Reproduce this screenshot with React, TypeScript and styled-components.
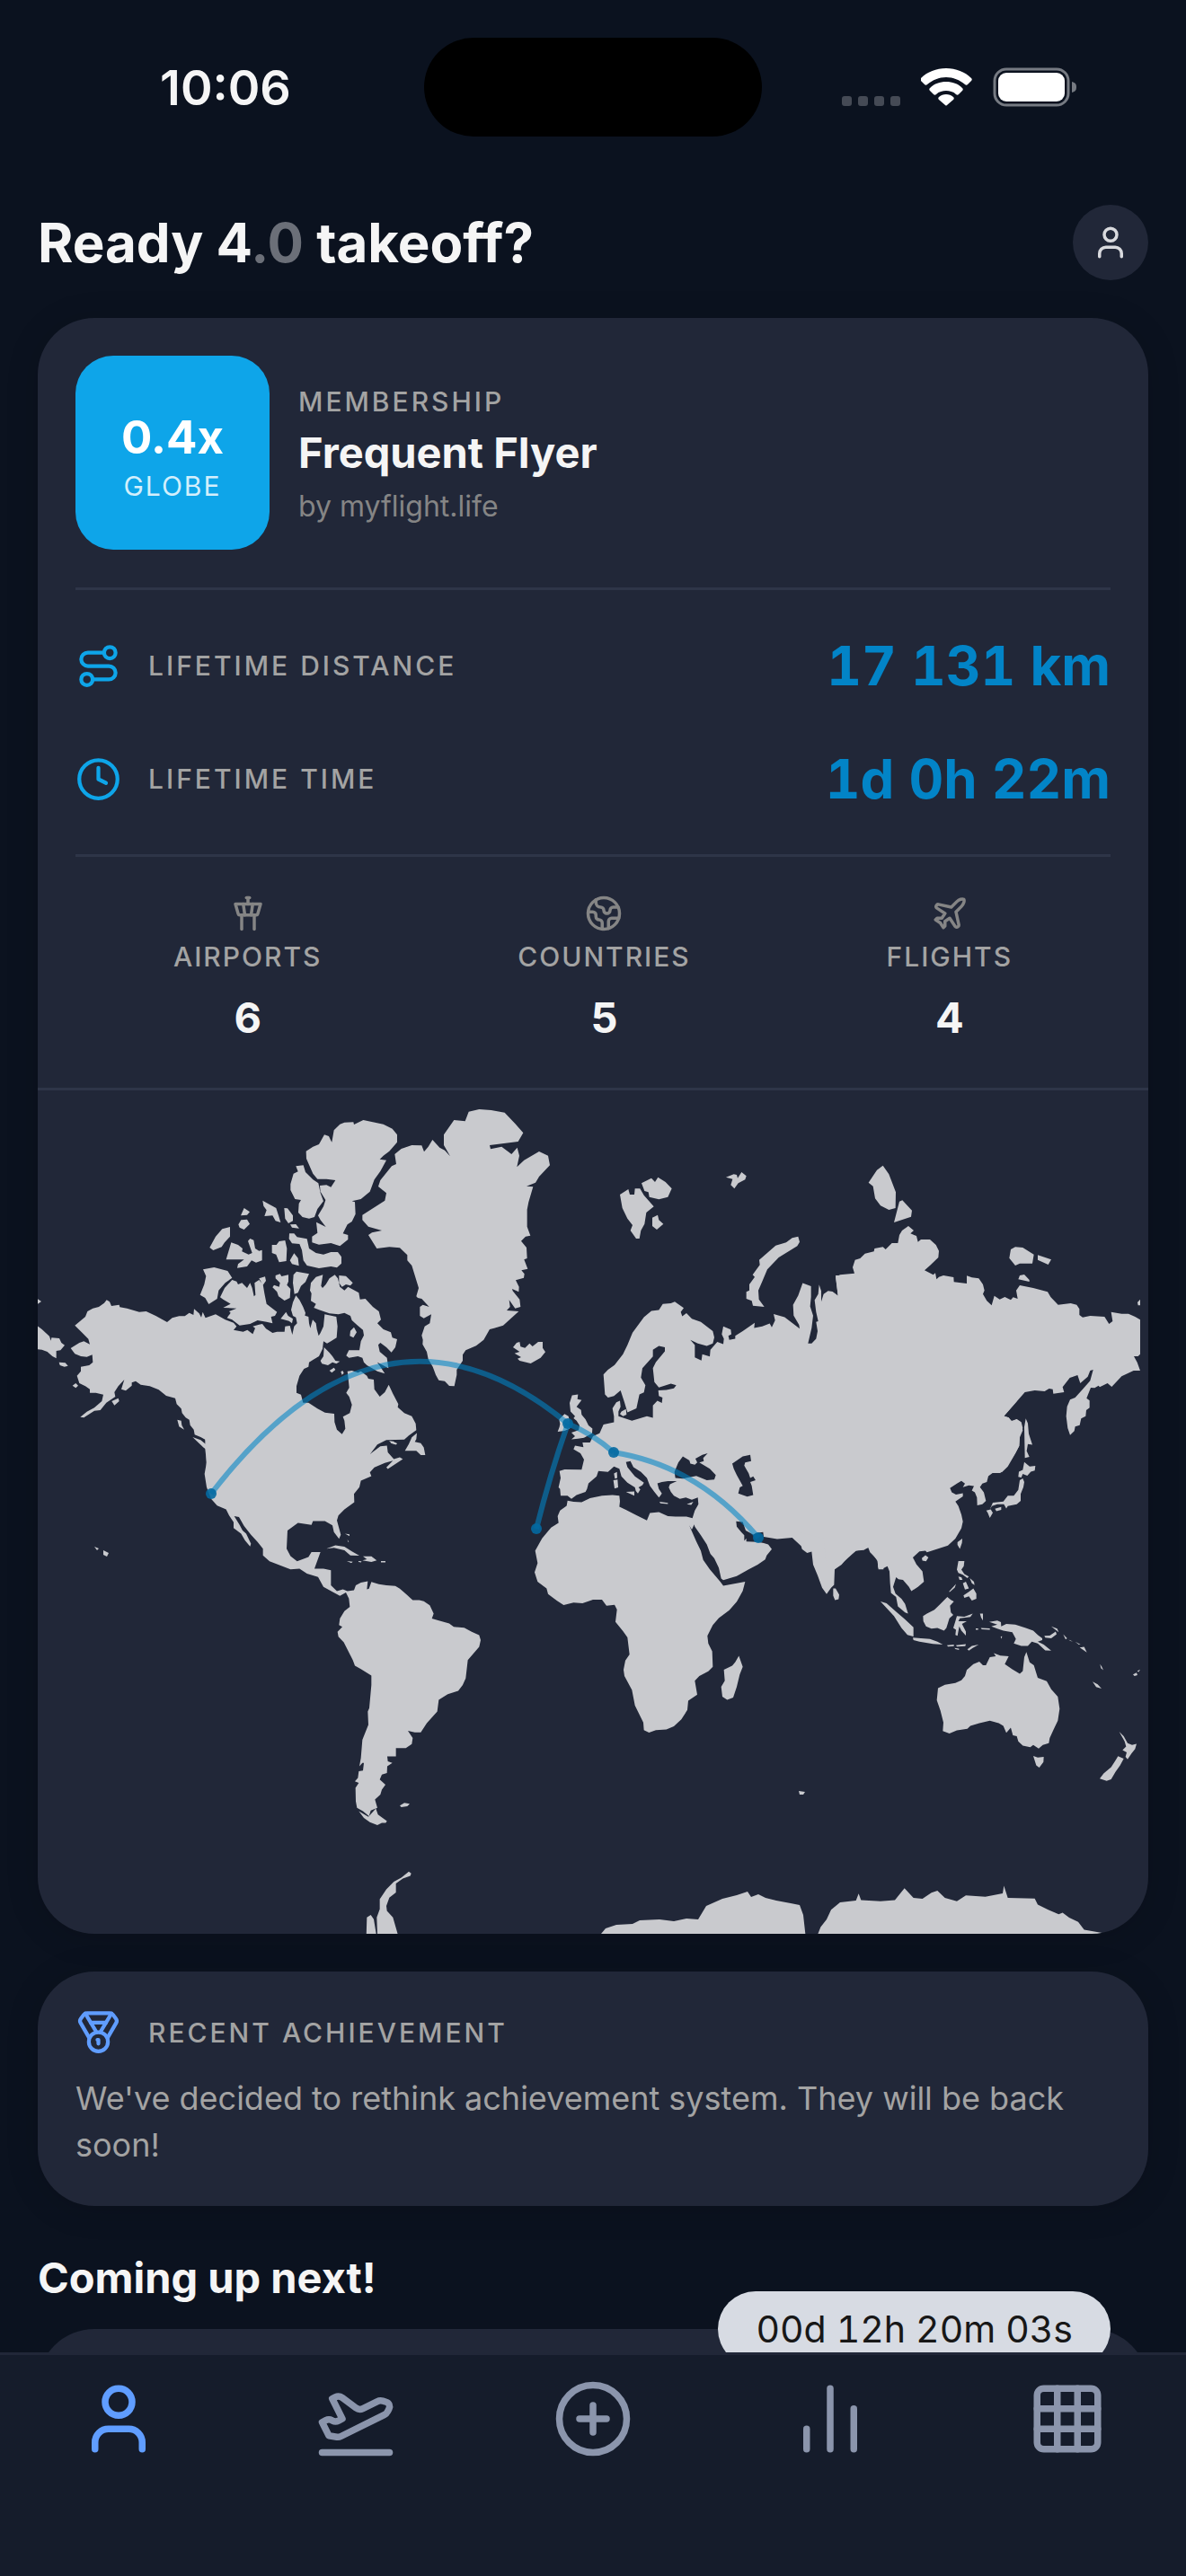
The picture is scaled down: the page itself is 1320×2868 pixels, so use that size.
import React, {FC, ReactNode} from 'react';
import styled, {createGlobalStyle} from 'styled-components';
import {
    ChartNoAxesColumn,
    CirclePlus,
    Clock,
    Earth,
    Grid3x3,
    Medal,
    Plane,
    PlaneTakeoff,
    Route,
    TowerControl,
    User,
} from 'lucide-react';

const colors = {
    page: '#0b121f',
    card: '#212738',
    line: '#2e3548',
    nav: '#151c2b',
    navLine: '#212738',
    text: '#f5f5f5',
    label: '#a3a3a3',
    muted: '#858585',
    faded: '#6b6f78',
    sky: '#0ea5e9',
    deepSky: '#0284c7',
    active: '#609dff',
    inactive: '#8b95ac',
    land: '#c9cace',
};

const GlobalStyle = createGlobalStyle`
    * {
        box-sizing: border-box;
    }

    body {
        margin: 0;
        background: ${colors.page};
        color: ${colors.text};
        font-family: Inter, 'Liberation Sans', sans-serif;
    }

    h1, h2, p, dl, dt, dd {
        margin: 0;
    }
`;

const Screen = styled.div`
    display: flex;
    flex-direction: column;
    height: 100vh;
`;

const StatusBar = styled.header`
    display: grid;
    grid-template-columns: 1fr 376px 1fr;
    align-items: center;
    flex-shrink: 0;
    padding: 42px 0 34px;
`;

const StatusTime = styled.time`
    padding: 2px 0 0 30px;
    text-align: center;
    font-size: 54px;
    font-weight: 600;
    line-height: 60px;
`;

const Island = styled.div`
    height: 110px;
    border-radius: 55px;
    background: #000;
`;

const StatusIcons = styled.div`
    display: flex;
    align-items: center;
    justify-content: center;
    padding-right: 32px;
`;

const Content = styled.main`
    flex: 1;
    min-height: 0;
    overflow-y: auto;
    scrollbar-width: none;
    padding: 42px 42px 0;
`;

const TitleRow = styled.div`
    display: flex;
    align-items: center;
    justify-content: space-between;
    margin-bottom: 42px;
`;

const Title = styled.h1`
    font-size: 60px;
    font-weight: 700;
    line-height: 84px;
`;

const Faded = styled.span`
    color: ${colors.faded};
`;

const ProfileButton = styled.button`
    display: flex;
    align-items: center;
    justify-content: center;
    width: 84px;
    height: 84px;
    padding: 0;
    border: 0;
    border-radius: 50%;
    background: ${colors.card};
    color: #d9dade;
`;

const Card = styled.section`
    overflow: hidden;
    margin-bottom: 42px;
    border-radius: 63px;
    background: ${colors.card};
    box-shadow: 0 4px 36px rgba(0, 0, 0, 0.15);
`;

const CardBody = styled.div`
    padding: 42px;
`;

const StatsBody = styled.div`
    padding: 0 42px;
`;

const Membership = styled.div`
    display: flex;
    align-items: center;
    gap: 32px;
    padding: 42px 0;
    border-bottom: 3px solid ${colors.line};
`;

const GlobeTile = styled.div`
    display: flex;
    flex-direction: column;
    align-items: center;
    justify-content: center;
    width: 216px;
    height: 216px;
    padding-top: 14px;
    border-radius: 42px;
    background: ${colors.sky};
    color: #fff;
`;

const GlobeValue = styled.strong`
    font-size: 51px;
    font-weight: 700;
    line-height: 60px;
`;

const GlobeLabel = styled.span`
    color: #d3effc;
    font-size: 30px;
    letter-spacing: 2px;
    line-height: 48px;
`;

const Label = styled.span<{$narrow?: boolean}>`
    color: ${colors.label};
    font-size: 30px;
    font-weight: 500;
    letter-spacing: ${({$narrow}) => ($narrow ? '2px' : '3px')};
    line-height: 42px;
    text-transform: uppercase;
`;

const Tier = styled.div`
    display: flex;
    flex-direction: column;
    padding-top: 6px;
`;

const TierName = styled.h2`
    font-size: 47px;
    font-weight: 700;
    line-height: 72px;
`;

const TierSource = styled.span`
    color: ${colors.muted};
    font-size: 32px;
    line-height: 48px;
`;

const Lifetime = styled.dl`
    display: flex;
    flex-direction: column;
    gap: 42px;
    padding: 42px 0;
    border-bottom: 3px solid ${colors.line};
`;

const LifetimeRow = styled.div`
    display: flex;
    align-items: center;
    justify-content: space-between;
`;

const IconLabel = styled.dt`
    display: flex;
    align-items: center;
    gap: 30px;
    color: ${colors.sky};
`;

const LifetimeValue = styled.dd`
    color: ${colors.deepSky};
    font-size: 60px;
    font-variant-numeric: tabular-nums;
    font-weight: 700;
    line-height: 84px;
`;

const Counters = styled.dl`
    display: flex;
    justify-content: space-around;
    padding: 42px 0 47px;
`;

const Counter = styled.div`
    display: flex;
    flex-direction: column;
    align-items: center;
`;

const CounterTitle = styled.dt`
    display: flex;
    flex-direction: column;
    align-items: center;
    gap: 6px;
    color: ${colors.muted};
`;

const CounterValue = styled.dd`
    padding-top: 15px;
    font-size: 47px;
    font-weight: 700;
    line-height: 63px;
`;

const MapSvg = styled.svg`
    display: block;
    width: 100%;
    border-top: 3px solid ${colors.line};
`;

const AchievementHeader = styled.div`
    display: flex;
    align-items: center;
    gap: 30px;
    margin-bottom: 22px;
    color: ${colors.active};
`;

const AchievementText = styled.p`
    color: ${colors.label};
    font-size: 36px;
    line-height: 52px;
`;

const SectionTitle = styled.h2`
    margin-bottom: 19px;
    font-size: 47px;
    font-weight: 700;
    line-height: 76px;
`;

const NextFlight = styled.section`
    position: relative;
    height: 400px;
    border-radius: 63px;
    background: ${colors.card};
`;

const Countdown = styled.time`
    position: absolute;
    top: -42px;
    right: 42px;
    padding: 0 42px;
    border-radius: 42px;
    background: #d7dbe3;
    color: #171717;
    font-size: 41px;
    font-variant-numeric: tabular-nums;
    line-height: 84px;
`;

const TabBar = styled.nav`
    display: grid;
    grid-template-columns: repeat(5, 1fr);
    flex-shrink: 0;
    padding: 26px 0 130px;
    border-top: 3px solid ${colors.navLine};
    background: ${colors.nav};
`;

const Tab = styled.a<{$active?: boolean}>`
    display: flex;
    justify-content: center;
    color: ${({$active}) => ($active ? colors.active : colors.inactive)};
`;

const SignalDots: FC = () => (
    <svg width="88" height="42" viewBox="0 0 88 42" fill="#454a55">
        {[0, 18, 36, 54].map(x => (
            <rect key={x} x={x} y="31" width="11" height="11" rx="3" />
        ))}
    </svg>
);

const Wifi: FC = () => (
    <svg width="80" height="42" viewBox="0 0 80 42" fill="#fff">
        <path d="M28 0c11 0 21 4 28 11 1 1 1 2 0 3l-4 4c-1 1-2 1-3 0C43 13 36 10 28 10S13 13 7 18c-1 1-2 1-3 0l-4-4c-1-1-1-2 0-3C7 4 17 0 28 0z" />
        <path d="M28 15c7 0 13 2 18 7 1 1 1 2 0 3l-4 4c-1 1-2 1-3 0-3-3-7-4-11-4s-8 1-11 4c-1 1-2 1-3 0l-4-4c-1-1-1-2 0-3 5-5 11-7 18-7z" />
        <path d="M28 29c3 0 6 1 8 3 1 1 1 2 0 3l-7 6q-1 1-2 0l-7-6c-1-1-1-2 0-3 2-2 5-3 8-3z" />
    </svg>
);

const Battery: FC = () => (
    <svg width="94" height="44" viewBox="0 0 94 44">
        <rect x="2" y="2" width="82" height="40" rx="13" fill="none" stroke="#767a82" strokeWidth="3" />
        <rect x="6" y="6" width="74" height="32" rx="9" fill="#fff" />
        <path d="M88 16c4 1 5 3 5 6s-1 5-5 6z" fill="#767a82" />
    </svg>
);

// Every region keeps its own drawing grid, the transform places it on the world map.
const regions = [
    {
        name: 'arctic-america',
        transform: 'translate(-2 -4) scale(0.33333)',
        d: `M130,797L165,768 172,750 190,740 210,735 228,722 236,712 246,718 252,732 278,728 280,736 304,740 345,752 368,750 400,765 438,786 455,772 478,766 497,766 512,755 526,762 528,742 545,757 552,770 557,752 566,772 600,760 632,778 660,788 670,800 660,812 692,818 706,812 724,826 732,806 724,800 745,794 756,792 768,808 790,822 805,818 830,818 832,800 848,798 856,828 862,800 872,790 868,770 858,765 852,745 858,720 868,697 880,712 892,735 900,755 898,764 910,768 912,790 916,806 924,778 935,790 938,810 944,832 950,822 960,800 964,760 1003,768 1007,800 1004,838 985,850 972,857 960,850 957,875 945,900 925,912 912,920 910,935 895,942 880,965 870,1000 870,1022 885,1028 892,1055 910,1055 940,1075 965,1088 996,1092 997,1120 1005,1145 1022,1160 1033,1142 1030,1115 1025,1102 1048,1090 1055,1062 1046,1035 1036,1022 1046,1005 1043,975 1040,950 1055,948 1075,955 1085,950 1105,965 1110,975 1128,978 1130,1010 1148,1035 1165,1020 1178,995 1192,1025 1210,1060 1208,1070 1230,1090 1255,1100 1268,1125 1270,1147 1245,1165 1230,1178 1170,1180 1140,1195 1115,1228 1100,1290 570,1290 568,1215 572,1195 565,1178 550,1170 530,1162 527,1145 515,1130 512,1112 500,1105 488,1090 485,1075 470,1060 465,1040 435,1032 410,1012 380,1000 350,995 333,983 320,988 320,998 300,1015 285,1010 295,978 275,1000 262,1020 265,1035 235,1055 215,1080 195,1082 160,1105 148,1103 170,1085 195,1072 220,1050 225,1028 200,1022 180,1022 180,1010 165,1000 145,990 137,965 150,950 150,935 178,930 190,920 188,895 170,902 150,900 130,892 116,873 145,855 160,850 180,860 175,842 155,822Z
M0,705L18,717 6,725 0,725Z M0,795L20,810 45,833 50,848 52,838 78,840 85,855 96,863 82,880 68,882 68,907 55,900 38,885 20,878 0,876Z M77,920L98,922 107,932 95,935 80,930Z M122,998L133,990 141,998 133,1006Z M253,1050L275,1040 278,1050 262,1064Z M472,1112L485,1115 487,1130 495,1145 478,1135Z M523,1170L550,1180 572,1198 583,1222 560,1205Z
M558,610L595,603 640,615 655,638 632,655 610,680 605,708 577,726 565,705 548,695 562,660 568,632Z M655,645L670,650 675,660 688,655 705,672 715,655 722,672 728,700 733,695 730,655 745,645 758,660 763,690 770,725 805,752 798,765 785,768 790,790 770,785 740,780 715,792 680,797 655,778 638,772 650,755 645,750 670,740 625,738 650,725 625,710 615,703 630,672Z M745,640L765,634 768,648 758,662Z
M580,537L600,500 622,475 648,468 648,500 630,520 620,535 592,546Z M652,520L675,528 690,540 688,550 710,560 722,555 708,515 715,507 727,512 732,540 745,548 755,545 755,580 735,587 720,580 705,600 672,605 675,592 695,577 635,577Z M676,460L685,445 705,443 714,458 695,477 680,470Z M684,430L695,405 714,418 705,428Z M757,380L780,393 802,405 810,430 817,453 800,448 790,430 763,432 770,412 760,398Z M829,405L840,406 858,430 858,448 843,456 832,440Z M849,460L868,459 879,473 855,470Z M788,528L803,528 812,516 832,513 838,540 836,582 812,586 802,560 788,555Z M848,580L862,556 875,572 878,598 855,592Z
M846,490L862,490 872,502 905,508 912,540 935,555 960,560 985,552 1008,552 1020,568 1020,590 1005,604 985,600 945,606 905,597 893,580 888,545 880,525 855,523 845,508Z M868,265L893,262 900,285 925,310 943,322 950,355 960,382 940,408 930,435 912,440 890,435 876,420 878,390 885,378 865,375 850,345 850,325 860,290 875,283Z
M988,185L995,145 1015,125 1030,119 1060,118 1062,126 1093,111 1160,125 1190,140 1206,160 1206,185 1180,215 1160,230 1148,242 1170,245 1150,282 1130,310 1115,350 1085,375 1055,382 1065,385 1067,425 1055,450 1040,460 1025,490 1042,495 1042,510 1015,532 985,522 945,527 922,520 922,500 940,488 936,452 968,468 950,445 942,430 960,400 967,378 950,350 948,330 970,328 985,335 1000,312 970,308 940,308 925,290 903,240 902,215 925,200 945,192 963,160 978,165 985,180Z
M860,628L870,617 912,625 900,652 885,665 875,688 863,692 858,655Z M800,630L815,625 820,633 843,628 843,650 838,662 850,675 848,705 830,714 810,700 805,685 790,670 795,662 812,668 815,655 800,640Z M817,775L835,752 842,765 858,775 855,790 845,782Z
M918,655L935,635 958,628 952,665 957,672 968,660 980,640 998,628 1008,640 1015,668 1030,680 1042,668 1078,688 1082,710 1100,708 1125,735 1145,750 1152,778 1140,790 1160,810 1185,820 1190,838 1206,843 1200,870 1187,887 1170,870 1150,855 1143,862 1148,885 1172,905 1177,940 1140,920 1165,958 1140,950 1105,930 1095,920 1090,905 1075,900 1045,905 1036,898 1045,880 1080,880 1085,850 1095,830 1092,812 1075,798 1055,780 1050,765 1030,755 1010,760 980,757 945,745 928,738 935,725 918,715 920,690 915,680Z
M1012,630L1035,632 1058,655 1050,664 1035,660 1022,668 1012,655Z M1050,815L1062,803 1071,820 1060,838 1048,832Z M962,870L980,888 990,900 1000,915 1015,917 1003,925 990,920 975,930 955,925 950,915 960,900Z M980,948L995,938 1000,945 988,955Z M1018,952L1024,948 1028,956 1022,962Z M1178,1183L1193,1184 1208,1194 1193,1192Z`,
    },
    {
        name: 'greenland',
        transform: 'translate(358 -4) scale(0.33333)',
        d: `M118,225L140,207 175,195 208,196 216,217 230,200 244,177 268,203 285,212 303,232 282,195 282,160 316,111 353,115 365,83 400,75 440,78 485,86 520,123 547,154 530,183 435,195 438,208 475,200 508,225 527,203 534,230 526,268 550,245 600,216 630,230 636,262 600,300 588,320 558,332 580,334 565,385 560,410 560,467 571,497 555,500 540,515 558,537 560,573 550,577 562,608 541,613 551,625 549,638 522,646 533,668 532,685 510,675 512,682 535,710 538,735 520,740 500,712 503,735 492,747 532,750 480,797 450,806 435,810 415,845 390,865 355,880 345,895 345,915 325,945 325,962 317,1000 300,999 285,983 265,980 255,962 245,935 230,910 225,885 211,860 212,845 208,830 218,800 235,790 240,760 215,773 202,765 202,735 212,728 233,735 208,708 195,705 190,700 198,672 175,597 160,580 160,562 135,538 100,535 58,540 30,495 42,487 75,480 30,467 10,445 10,428 85,380 90,355 63,333 70,312 108,265 123,258Z
M513,870L525,855 535,852 538,868 553,872 568,857 578,867 597,852 612,852 612,872 621,886 605,905 572,924 535,915 528,908 540,903 518,890 535,885Z M870,360L898,342 903,360 918,360 920,340 937,340 950,362 983,400 958,420 952,458 940,480 935,507 924,507 905,480 912,462 895,440 878,405Z M942,322L975,305 987,318 997,302 1022,318 1043,340 1030,368 1000,376 968,368 965,352 952,348Z M978,437L996,428 1000,445 1015,458 993,477 978,465Z`,
    },
    {
        name: 'siberia',
        transform: 'translate(758 -4) scale(0.33333)',
        d: `M400,900L398,697 390,635 405,628 453,623 447,603 455,578 472,573 488,557 518,550 520,540 548,535 557,543 578,522 598,522 603,495 612,480 633,465 651,480 640,490 660,498 665,518 675,510 705,510 725,528 735,548 733,570 705,597 687,613 716,628 723,622 727,643 735,635 750,630 784,636 785,652 828,657 828,631 845,637 868,640 882,660 887,680 882,692 895,715 911,730 920,698 938,710 955,702 975,712 983,703 998,708 993,680 1005,663 1050,672 1098,685 1108,702 1133,728 1175,723 1195,728 1204,742 1204,762 1215,770 1240,765 1288,768 1303,792 1315,783 1310,752 1345,758 1368,758 1390,768 1407,778 1407,893 1400,900 1386,900 1397,920 1407,948 1385,948 1345,967 1312,1002 1298,990 1272,1003 1268,998 1255,1006 1242,1005 1228,1040 1238,1048 1238,1072 1227,1080 1225,1100 1210,1108 1205,1130 1190,1135 1187,1150 1173,1163 1165,1140 1160,1100 1163,1068 1173,1045 1190,1038 1215,1010 1240,982 1250,945 1240,948 1232,968 1207,990 1198,963 1172,972 1148,1003 1153,1020 1117,1025 1115,1010 1103,1008 1088,1017 1055,1014 1022,1020 952,1100 968,1105 980,1118 995,1110 1010,1120 1015,1140 1005,1160 1003,1200 990,1225 965,1260 940,1290 400,1290Z
M265,500L270,518 262,532 200,570 162,610 145,650 132,680 134,710 152,735 114,731 110,715 92,708 92,685 102,680 102,660 120,635 113,628 137,595 135,578 190,530 225,520 245,505Z M24,302L50,292 60,294 63,305 76,285 92,298 88,310 65,322 52,340 40,328 46,308Z M548,263L568,292 591,352 590,405 568,411 540,397 522,373 515,332 500,320 528,278Z M585,453L603,383 613,379 645,413 642,434Z M970,572L975,543 990,535 1015,537 1052,560 1047,590 1005,590 990,597Z M1065,562L1110,577 1100,594 1065,578Z M1000,643L1005,630 1020,627 1037,645 1037,651Z M1407,710L1398,720 1400,730 1407,730Z`,
    },
    {
        name: 'americas',
        transform: 'translate(158 366) scale(0.33333 0.3699)',
        d: `M85,60L85,90 90,130 83,165 90,205 105,240 125,260 155,272 165,290 180,310 180,328 205,345 218,365 235,383 238,375 222,345 210,335 200,318 182,292 198,295 215,322 238,348 260,370 278,390 278,410 300,428 335,440 370,452 400,450 425,465 462,475 480,505 510,520 535,532 555,522 565,540 568,565 550,578 535,600 532,620 543,625 527,640 530,655 548,672 578,725 585,742 605,752 640,772 640,800 633,870 628,880 630,920 610,965 605,1020 600,1045 610,1035 615,1035 612,1058 598,1060 595,1080 585,1090 598,1095 587,1110 588,1150 592,1170 612,1180 632,1195 638,1178 660,1170 652,1145 670,1130 675,1115 687,1100 668,1085 675,1070 692,1065 693,1045 710,1035 695,1030 693,1015 722,1015 722,990 755,990 775,978 778,960 762,938 785,943 805,943 825,915 860,880 865,845 895,828 930,818 945,800 955,780 962,725 1000,685 1005,665 1000,650 975,640 950,628 915,625 900,615 860,605 842,600 848,585 835,560 815,548 800,545 778,545 760,530 735,510 720,502 690,500 665,497 640,490 632,510 625,512 628,488 605,492 588,500 582,515 560,518 545,512 525,518 505,500 505,455 480,450 450,450 460,425 470,400 440,400 430,415 392,428 370,412 357,390 360,335 395,312 440,318 445,307 485,307 510,320 515,340 532,360 538,348 525,305 530,290 550,272 583,250 582,225 600,205 605,185 640,172 635,160 650,145 685,132 712,125 690,145 695,150 745,120 735,115 715,120 695,100 692,80 670,82 636,105 636,60Z
M598,1180L630,1197 655,1172 662,1190 692,1210 688,1215 675,1215 660,1222 635,1213 615,1200Z M735,1163L750,1155 768,1158 760,1165 740,1168Z M490,390L520,380 550,384 575,398 600,411 570,410 550,395 515,387Z M612,413L640,413 658,425 640,430 610,425 625,422Z M558,427L578,429 573,433Z M597,427L607,428 606,431 597,430Z M672,427H687V431H672Z M552,345L567,347 567,352Z M560,362L565,370 562,370Z M792,42L790,60 785,68 805,72 815,85 820,108 805,108 790,95 752,95 765,75 775,55Z M703,66L725,72 722,77 705,72Z
M773,1367L770,1375 745,1383 722,1398 722,1425 700,1440 690,1465 692,1480 712,1500 728,1550 728,1600 662,1600 658,1500 668,1475 668,1445 690,1415 715,1392 740,1380 765,1362Z M623,1560L625,1500 638,1492 648,1505 658,1560Z`,
    },
    {
        name: 'europe-africa',
        transform: 'translate(518 206) scale(0.33333 0.34439)',
        d: `M335,320L350,305 372,290 400,255 415,225 432,185 470,135 495,115 520,112 533,92 560,90 573,85 603,105 593,118 598,132 612,122 630,140 660,150 700,180 705,200 700,220 680,228 650,220 625,208 640,225 640,265 662,275 665,255 690,262 692,240 715,215 735,222 737,205 730,190 735,165 760,175 762,190 752,195 755,208 775,205 775,195 800,180 840,153 838,170 865,165 890,155 897,168 908,145 903,125 940,135 990,172 988,160 970,130 968,95 985,65 1000,25 1028,35 1028,70 1025,100 1035,130 1030,170 1018,220 1030,220 1045,205 1050,180 1045,150 1052,148 1045,118 1040,80 1052,60 1055,30 1062,50 1062,85 1070,60 1085,50 1100,52 1118,65 1110,0 1270,0 1270,950 1253,950 1250,920 1225,895 1218,878 1205,888 1178,890 1150,912 1130,935 1107,950 1105,1000 1095,1010 1080,1030 1065,1010 1050,970 1035,935 1030,893 1015,897 998,885 995,875 965,848 915,852 870,845 868,830 850,832 835,838 810,825 800,797 778,795 780,812 795,830 805,840 805,858 812,850 812,860 850,862 870,865 885,870 897,885 880,905 875,918 850,935 820,950 780,972 735,985 728,980 720,945 705,915 692,900 680,870 660,840 640,812 638,805 630,822 610,790 612,780 632,785 640,760 652,740 650,718 630,725 610,718 590,722 570,712 560,700 553,685 557,675 580,665 550,665 530,668 515,672 520,690 530,705 525,712 520,718 505,700 490,680 480,655 460,635 435,620 425,600 410,603 415,620 440,650 470,670 465,678 452,685 458,692 450,705 443,697 440,685 415,670 395,650 388,625 370,618 350,635 318,632 312,650 285,672 280,690 275,700 245,710 228,722 215,712 192,712 190,690 185,685 192,655 188,632 205,627 262,628 270,595 258,575 235,562 240,550 268,555 265,540 290,540 300,520 322,510 335,482 370,475 370,455 365,430 378,410 390,405 392,425 385,440 385,455 430,470 480,455 500,460 500,420 515,405 530,412 532,395 520,390 518,372 545,370 570,365 578,355 560,350 520,362 505,345 500,300 510,280 540,245 540,232 520,228 500,240 500,262 465,300 460,330 475,355 470,378 455,385 445,430 415,443 405,410 392,372 370,390 350,395 340,385Z
M215,728L235,732 262,733 290,720 330,712 365,710 388,712 390,730 388,748 410,758 445,775 480,792 490,768 520,765 550,778 575,780 612,780 620,805 645,860 660,890 668,920 690,950 725,990 735,1003 808,990 800,1020 780,1055 755,1082 720,1108 700,1130 682,1165 685,1190 698,1215 700,1265 685,1280 655,1295 640,1310 648,1355 618,1375 615,1405 595,1435 570,1458 545,1468 510,1470 487,1478 470,1470 468,1445 440,1390 430,1340 405,1295 402,1275 408,1245 422,1225 415,1170 400,1150 375,1120 380,1080 372,1065 345,1068 330,1048 300,1048 265,1060 235,1058 202,1066 180,1052 150,1030 145,1012 115,990 105,960 115,930 107,890 130,850 160,815 185,800 182,778 190,760 212,745Z
M787,1230L800,1265 790,1290 780,1330 768,1365 748,1372 732,1362 728,1330 740,1310 737,1275 765,1262 775,1250Z M1102,1012L1110,1012 1122,1032 1120,1047 1108,1050 1102,1035Z M395,440L410,432 412,450 400,455 390,448Z M370,640L380,635 381,655 373,657Z M368,662L382,660 384,685 372,689Z M410,700L438,698 438,712Z M522,732L550,735 550,739 525,737Z M613,740L635,732 628,742Z
M230,388L250,385 248,400 262,403 245,425 260,435 262,450 275,465 285,485 298,495 297,510 270,525 250,528 228,530 240,520 228,508 252,500 255,485 245,470 235,462 240,455 225,440 222,412Z M187,465L205,448 218,455 222,472 222,495 205,502 182,505 188,490 190,480Z`,
    },
    {
        name: 'asia-pacific',
        transform: 'translate(878 346) scale(0.33333 0.38265)',
        d: `M-100,0L635,0 592,43 608,48 615,58 635,52 650,68 655,85 645,105 643,130 625,160 605,190 585,207 565,202 540,218 535,235 520,240 512,250 525,265 532,290 520,300 503,303 502,280 495,265 485,260 492,247 475,245 455,250 462,240 450,232 435,240 412,253 418,265 432,272 455,268 455,277 430,292 440,305 450,330 455,350 450,370 430,400 405,420 370,430 335,440 330,435 310,437 288,455 300,475 320,495 325,525 305,540 283,553 275,540 255,520 240,518 232,512 222,540 230,560 250,575 262,590 272,618 262,615 238,597 232,570 215,558 212,530 210,495 203,480 185,488 172,485 170,465 150,440 142,425 130,430 98,435 60,465 25,490 0,480 -10,400 -100,380Z
M660,75L665,50 672,65 675,95 687,127 672,125 668,145 677,162 662,165Z M437,410L453,400 452,412 445,430 437,418Z M318,457L330,448 340,455 332,466 320,464Z M660,177L678,190 697,188 695,202 682,205 670,217 655,212 650,222 640,220 642,205 655,200Z M645,230L655,225 660,235 657,250 648,270 648,290 635,300 605,305 600,312 592,300 570,300 552,305 545,315 555,295 590,292 605,275 625,275 640,258Z M533,318L548,315 555,325 545,340 538,325Z M562,313L583,308 583,316 567,320Z
M440,465L460,465 458,480 450,490 460,503 475,510 470,515 455,505 440,500 435,490Z M455,530L465,525 475,545 462,548Z M478,515L492,525 494,535 485,530Z M457,565L475,555 490,545 500,560 500,575 485,580 475,568 460,572Z M408,555L432,532 428,542 412,555Z M440,510L450,512 454,520 444,520Z
M322,625L335,618 360,607 380,590 403,570 415,578 425,583 412,595 415,615 423,622 410,632 400,660 392,668 370,660 350,662 332,655 323,640Z M180,583L200,588 235,615 262,635 290,658 290,685 270,680 250,660 225,625Z M288,688L315,690 345,692 370,700 388,708 355,706 310,700 290,695Z M402,710L425,708 425,713 405,714Z M432,710L465,707 463,713 435,714Z M470,722L485,712 508,708 488,718 475,726Z M427,718L442,720 442,724 430,721Z
M435,625L460,627 488,618 480,628 445,632 440,640 468,640 452,648 465,670 465,682 450,668 443,655 437,683 430,680 432,665 423,660 430,640Z M512,618H522V638L516,630Z M515,660L545,661 545,665 518,664Z M498,661H506V665H498Z M581,685L586,684 584,692Z
M543,642L570,638 582,643 583,655 600,648 630,650 665,660 690,668 705,680 720,690 720,695 705,700 725,708 750,726 730,725 705,705 685,700 672,712 650,712 625,705 632,692 620,672 590,668 570,662 550,655 570,650Z M727,683L745,682 765,670 768,678 750,690 730,688Z M750,655L770,662 775,672Z M790,678L803,690 798,693Z M808,694L822,699 814,698Z M830,700L848,708 842,708Z M845,717L860,715 869,731Z M913,765L919,773 924,783 916,777Z M888,816L905,824 918,836 900,832Z M1023,795L1035,790 1038,797 1028,800Z M1037,785L1047,781 1042,788Z
M372,835L395,825 430,820 450,812 462,800 468,782 490,765 510,758 522,768 532,768 545,745 565,742 558,733 580,740 608,742 595,765 620,780 645,793 655,785 660,745 667,730 678,760 692,768 698,785 705,805 735,815 750,838 772,860 778,895 772,930 758,955 745,980 742,995 722,1000 708,1011 690,1000 680,1007 655,1002 640,990 635,975 622,972 615,950 600,965 590,945 575,937 545,930 510,937 480,945 470,953 435,958 410,967 388,960 390,935 380,900 368,870Z
M690,1032L705,1037 725,1035 724,1050 710,1066 700,1060Z M977,962L992,975 1005,995 1020,1000 1035,997 1030,1012 1018,1025 1005,1042 998,1035 1002,1022 988,1015 1000,1005 995,990Z M973,1033L992,1040 980,1060 965,1078 950,1100 935,1105 912,1098 925,1083 950,1065 965,1045Z
M-40,1575L-20,1530 0,1508 15,1480 45,1458 98,1453 107,1433 115,1452 180,1455 228,1452 260,1417 290,1445 320,1448 350,1430 370,1424 395,1445 435,1455 465,1438 530,1442 588,1432 592,1410 605,1445 695,1447 705,1465 740,1480 775,1493 788,1488 810,1503 840,1515 860,1538 920,1547 920,1575Z`,
    },
    {
        name: 'far-south',
        transform: 'translate(0 0)',
        d: `M622,945L632,933 644,929 662,928 670,924 692,923 708,925 722,922 735,923 744,908 762,900 778,896 790,892 794,898 802,895 810,899 822,902 838,905 848,907 852,918 855,945Z M847,780L854,781 852,784 848,784Z M73,512L79,515 77,519 73,517Z M63,508L68,510 66,512Z`,
    },
];

const inlandSeas =
    'M572,635L585,605 600,585 622,598 625,608 640,612 648,605 642,592 665,580 683,575 668,590 670,600 655,605 690,625 710,645 705,660 680,662 645,648 600,657 575,655Z M765,608L800,585 825,580 828,600 808,605 805,615 820,640 825,655 835,650 843,662 825,668 830,680 835,710 815,715 785,705 790,685 800,680 780,645 770,625Z';

const routes = ['M193 449Q384 201 590 371', 'M590 371Q617 382 641 403', 'M641 403Q735 418 802 498', 'M590 371Q570 428 555 488'];

const airports = [
    [193, 449],
    [590, 371],
    [641, 403],
    [802, 498],
    [555, 488],
];

const FlightMap: FC = () => (
    <MapSvg viewBox="0 0 1236 939" role="img" aria-label="Flight map">
        {regions.map(region => (
            <path key={region.name} transform={region.transform} d={region.d} fill={colors.land} />
        ))}
        <path transform="translate(518 206) scale(0.33333 0.34439)" d={inlandSeas} fill={colors.card} />
        <g fill="none" stroke={colors.deepSky} strokeOpacity="0.58" strokeWidth="6">
            {routes.map(route => (
                <path key={route} d={route} />
            ))}
        </g>
        <g fill="#0369a1" fillOpacity="0.9">
            {airports.map(([x, y]) => (
                <circle key={x} cx={x} cy={y} r="6" />
            ))}
        </g>
    </MapSvg>
);

type LifetimeItemProps = {icon: ReactNode; label: string; value: string};

const LifetimeItem: FC<LifetimeItemProps> = ({icon, label, value}) => (
    <LifetimeRow>
        <IconLabel>
            {icon}
            <Label>{label}</Label>
        </IconLabel>
        <LifetimeValue>{value}</LifetimeValue>
    </LifetimeRow>
);

const counters = [
    {label: 'Airports', value: 6, Icon: TowerControl},
    {label: 'Countries', value: 5, Icon: Earth},
    {label: 'Flights', value: 4, Icon: Plane},
];

const tabs = [
    {label: 'Profile', Icon: User},
    {label: 'Flights', Icon: PlaneTakeoff},
    {label: 'Add flight', Icon: CirclePlus},
    {label: 'Statistics', Icon: ChartNoAxesColumn},
    {label: 'More', Icon: Grid3x3},
];

const App: FC = () => (
    <>
        <GlobalStyle />
        <Screen>
            <StatusBar>
                <StatusTime>10:06</StatusTime>
                <Island />
                <StatusIcons>
                    <SignalDots />
                    <Wifi />
                    <Battery />
                </StatusIcons>
            </StatusBar>
            <Content>
                <TitleRow>
                    <Title>
                        Ready 4<Faded>.0</Faded> takeoff?
                    </Title>
                    <ProfileButton type="button" aria-label="Profile">
                        <User size={42} />
                    </ProfileButton>
                </TitleRow>
                <Card>
                    <StatsBody>
                        <Membership>
                            <GlobeTile>
                                <GlobeValue>0.4x</GlobeValue>
                                <GlobeLabel>GLOBE</GlobeLabel>
                            </GlobeTile>
                            <Tier>
                                <Label>Membership</Label>
                                <TierName>Frequent Flyer</TierName>
                                <TierSource>by myflight.life</TierSource>
                            </Tier>
                        </Membership>
                        <Lifetime>
                            <LifetimeItem icon={<Route size={51} />} label="Lifetime distance" value="17 131 km" />
                            <LifetimeItem icon={<Clock size={51} />} label="Lifetime time" value="1d 0h 22m" />
                        </Lifetime>
                        <Counters>
                            {counters.map(({label, value, Icon}) => (
                                <Counter key={label}>
                                    <CounterTitle>
                                        <Icon size={42} />
                                        <Label $narrow>{label}</Label>
                                    </CounterTitle>
                                    <CounterValue>{value}</CounterValue>
                                </Counter>
                            ))}
                        </Counters>
                    </StatsBody>
                    <FlightMap />
                </Card>
                <Card>
                    <CardBody>
                        <AchievementHeader>
                            <Medal size={51} />
                            <Label>Recent achievement</Label>
                        </AchievementHeader>
                        <AchievementText>
                            We've decided to rethink achievement system. They will be back soon!
                        </AchievementText>
                    </CardBody>
                </Card>
                <SectionTitle>Coming up next!</SectionTitle>
                <NextFlight>
                    <Countdown>00d 12h 20m 03s</Countdown>
                </NextFlight>
            </Content>
            <TabBar>
                {tabs.map(({label, Icon}, index) => (
                    <Tab key={label} href="#" aria-label={label} $active={index === 0}>
                        <Icon size={90} />
                    </Tab>
                ))}
            </TabBar>
        </Screen>
    </>
);

export default App;
